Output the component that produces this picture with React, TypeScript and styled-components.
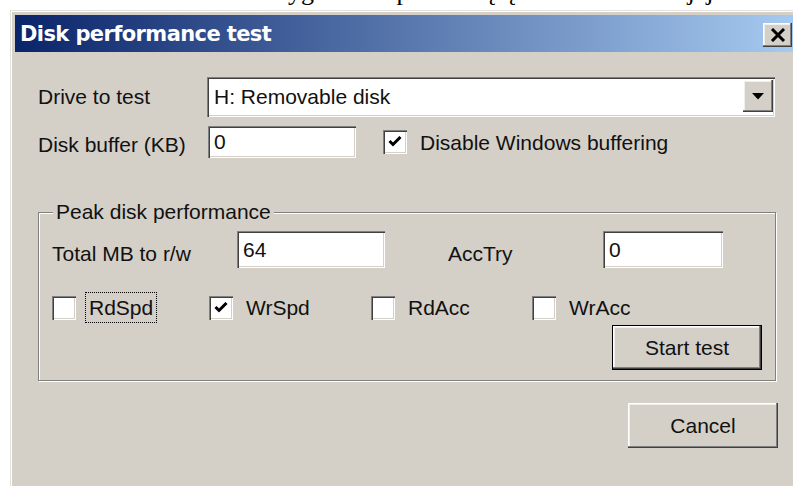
import React, { FunctionComponent } from "react";
import styled, { createGlobalStyle, css } from "styled-components";

const face = "#d4d0c8";

const GlobalStyle = createGlobalStyle`
  html, body {
    margin: 0;
    padding: 0;
    background: #ffffff;
    overflow: hidden;
  }
  body {
    font-family: "Liberation Sans", Arial, sans-serif;
  }
`;

// classic 3D edges
const raised = css`
  box-shadow: inset -1px -1px 0 #404040, inset -2px -2px 0 #808080,
    inset 1px 1px 0 #ffffff, inset 2px 2px 0 #f1efeb;
`;
const sunken = css`
  box-shadow: inset 1px 1px 0 #808080, inset 2px 2px 0 #404040,
    inset -1px -1px 0 #ffffff, inset -2px -2px 0 ${face};
`;

const Page = styled.div`
  width: 793px;
  height: 486px;
  overflow: hidden;
  background: #ffffff;
`;

// tail of the document line sitting behind the dialog
const DocStrip = styled.div`
  height: 10px;
  overflow: hidden;
`;

const DocLine = styled.p`
  margin: -23px 0 0 0;
  white-space: nowrap;
  font-family: "Liberation Serif", "Times New Roman", serif;
  font-size: 26px;
  line-height: 30px;
  color: #000;
`;

const Dialog = styled.div`
  margin-left: 10px;
  width: 789px;
  height: 480px;
  box-sizing: border-box;
  background: ${face};
  border-top: 1px solid #e4e1dc;
  border-left: 1px solid #e4e1dc;
  box-shadow: inset 1px 1px 0 #ffffff;
  padding: 4px 4px 0 4px;
`;

const TitleBar = styled.div`
  height: 37px;
  display: flex;
  align-items: center;
  justify-content: space-between;
  padding: 0 3px 0 5px;
  background: linear-gradient(to right, #0a246a, #a6caf0);
`;

const TitleText = styled.span`
  color: #ffffff;
  font-family: "DejaVu Sans", Tahoma, sans-serif;
  font-weight: bold;
  font-size: 21px;
  letter-spacing: -0.6px;
`;

const CloseButton = styled.div`
  width: 29px;
  height: 24px;
  margin-top: 3px;
  background: ${face};
  ${raised};
  display: flex;
  align-items: center;
  justify-content: center;
`;

const Body = styled.div`
  padding: 25px 0 0 23px;
  display: flex;
  flex-direction: column;
`;

const FormRow = styled.div<{ $top?: number }>`
  display: flex;
  align-items: center;
  margin-top: ${(p) => p.$top ?? 0}px;
`;

const FieldLabel = styled.span<{ $width: number; $drop?: number; $indent?: number }>`
  flex: none;
  width: ${(p) => p.$width}px;
  margin-left: ${(p) => p.$indent ?? 0}px;
  padding-top: ${(p) => p.$drop ?? 0}px;
  font-size: 21px;
  color: #111;
`;

const ComboBox = styled.div`
  width: 568px;
  height: 40px;
  box-sizing: border-box;
  background: #ffffff;
  ${sunken};
  display: flex;
  align-items: flex-start;
  padding: 3px 2px 0 2px;
`;

const ComboText = styled.span`
  flex: 1;
  padding-left: 5px;
  font-size: 21px;
  line-height: 34px;
  color: #111;
`;

const DropButton = styled.div`
  width: 30px;
  height: 32px;
  background: ${face};
  ${raised};
  display: flex;
  align-items: center;
  justify-content: center;
`;

const TextBox = styled.input<{ $width: number; $height: number }>`
  width: ${(p) => p.$width}px;
  height: ${(p) => p.$height}px;
  box-sizing: border-box;
  flex: none;
  margin: 0;
  border: 0;
  padding: 0 4px 0 6px;
  background: #ffffff;
  ${sunken};
  font: 21px "Liberation Sans", Arial, sans-serif;
  color: #111;
  outline: none;
`;

const CheckOption = styled.div<{ $indent?: number }>`
  display: flex;
  align-items: center;
  margin-left: ${(p) => p.$indent ?? 0}px;
`;

const CheckBox = styled.span`
  flex: none;
  width: 24px;
  height: 24px;
  box-sizing: border-box;
  background: #ffffff;
  ${sunken};
  display: flex;
  align-items: center;
  justify-content: center;
`;

const CheckLabel = styled.span<{ $focused?: boolean }>`
  margin-left: 9px;
  padding: 0 3px;
  border: 1px dotted ${(p) => (p.$focused ? "#000" : "transparent")};
  font-size: 21px;
  line-height: 29px;
  color: #111;
`;

const GroupFrame = styled.div`
  position: relative;
  width: 738px;
  box-sizing: border-box;
  margin-top: 54px;
  padding: 18px 13px 10px 13px;
  border: 1px solid #808080;
  box-shadow: inset 1px 1px 0 #ffffff, 1px 1px 0 #ffffff;
`;

const GroupCaption = styled.span`
  position: absolute;
  top: -14px;
  left: 14px;
  padding: 0 3px;
  background: ${face};
  font-size: 21px;
  line-height: 26px;
  color: #111;
`;

const OptionGrid = styled.div`
  display: grid;
  grid-template-columns: 157px 162px 161px auto;
  align-items: center;
  height: 31px;
  margin-top: 24px;
`;

const ButtonRow = styled.div<{ $top: number; $width?: number }>`
  display: flex;
  justify-content: flex-end;
  margin-top: ${(p) => p.$top}px;
  width: ${(p) => (p.$width ? `${p.$width}px` : "auto")};
`;

const PushButton = styled.div<{ $default?: boolean }>`
  width: 150px;
  height: 45px;
  box-sizing: border-box;
  display: flex;
  align-items: center;
  justify-content: center;
  background: ${face};
  border: ${(p) => (p.$default ? "1px solid #000" : "0")};
  ${raised};
  font-size: 21px;
  color: #111;
`;

const Tick: FunctionComponent = () => (
  <svg width="14" height="12" viewBox="0 0 14 12">
    <path d="M1.5 5 L5 8.5 L12.5 1" stroke="#000" strokeWidth="3" fill="none" />
  </svg>
);

interface IOptionProps {
  label: string;
  checked?: boolean;
  focused?: boolean;
  indent?: number;
}

const Option: FunctionComponent<IOptionProps> = ({ label, checked, focused, indent }) => (
  <CheckOption $indent={indent}>
    <CheckBox>{checked && <Tick />}</CheckBox>
    <CheckLabel $focused={focused}>{label}</CheckLabel>
  </CheckOption>
);

const App: FunctionComponent = () => {
  return (
    <Page>
      <GlobalStyle />
      <DocStrip>
        <DocLine>
          wodu na emu w wielkości sygnału na przesuniętą o takt wartość i jej sobo
        </DocLine>
      </DocStrip>
      <Dialog>
        <TitleBar>
          <TitleText>Disk performance test</TitleText>
          <CloseButton>
            <svg width="16" height="14" viewBox="0 0 16 14">
              <path d="M2 1 L14 13 M14 1 L2 13" stroke="#000" strokeWidth="3" />
            </svg>
          </CloseButton>
        </TitleBar>
        <Body>
          <FormRow>
            <FieldLabel $width={169}>Drive to test</FieldLabel>
            <ComboBox>
              <ComboText>H: Removable disk</ComboText>
              <DropButton>
                <svg width="12" height="7" viewBox="0 0 12 7">
                  <path d="M0 0 H12 L6 6.5 Z" fill="#000" />
                </svg>
              </DropButton>
            </ComboBox>
          </FormRow>
          <FormRow $top={9}>
            <FieldLabel $width={170} $drop={6}>Disk buffer (KB)</FieldLabel>
            <TextBox $width={148} $height={32} defaultValue="0" readOnly />
            <Option label="Disable Windows buffering" checked indent={27} />
          </FormRow>
          <GroupFrame>
            <GroupCaption>Peak disk performance</GroupCaption>
            <FormRow>
              <FieldLabel $width={185} $drop={9}>Total MB to r/w</FieldLabel>
              <TextBox $width={148} $height={37} defaultValue="64" readOnly />
              <FieldLabel $width={155} $drop={9} $indent={63}>AccTry</FieldLabel>
              <TextBox $width={120} $height={37} defaultValue="0" readOnly />
            </FormRow>
            <OptionGrid>
              <Option label="RdSpd" focused />
              <Option label="WrSpd" checked />
              <Option label="RdAcc" />
              <Option label="WrAcc" />
            </OptionGrid>
            <ButtonRow $top={2}>
              <PushButton $default>Start test</PushButton>
            </ButtonRow>
          </GroupFrame>
          <ButtonRow $top={22} $width={740}>
            <PushButton>Cancel</PushButton>
          </ButtonRow>
        </Body>
      </Dialog>
    </Page>
  );
};

export default App;
